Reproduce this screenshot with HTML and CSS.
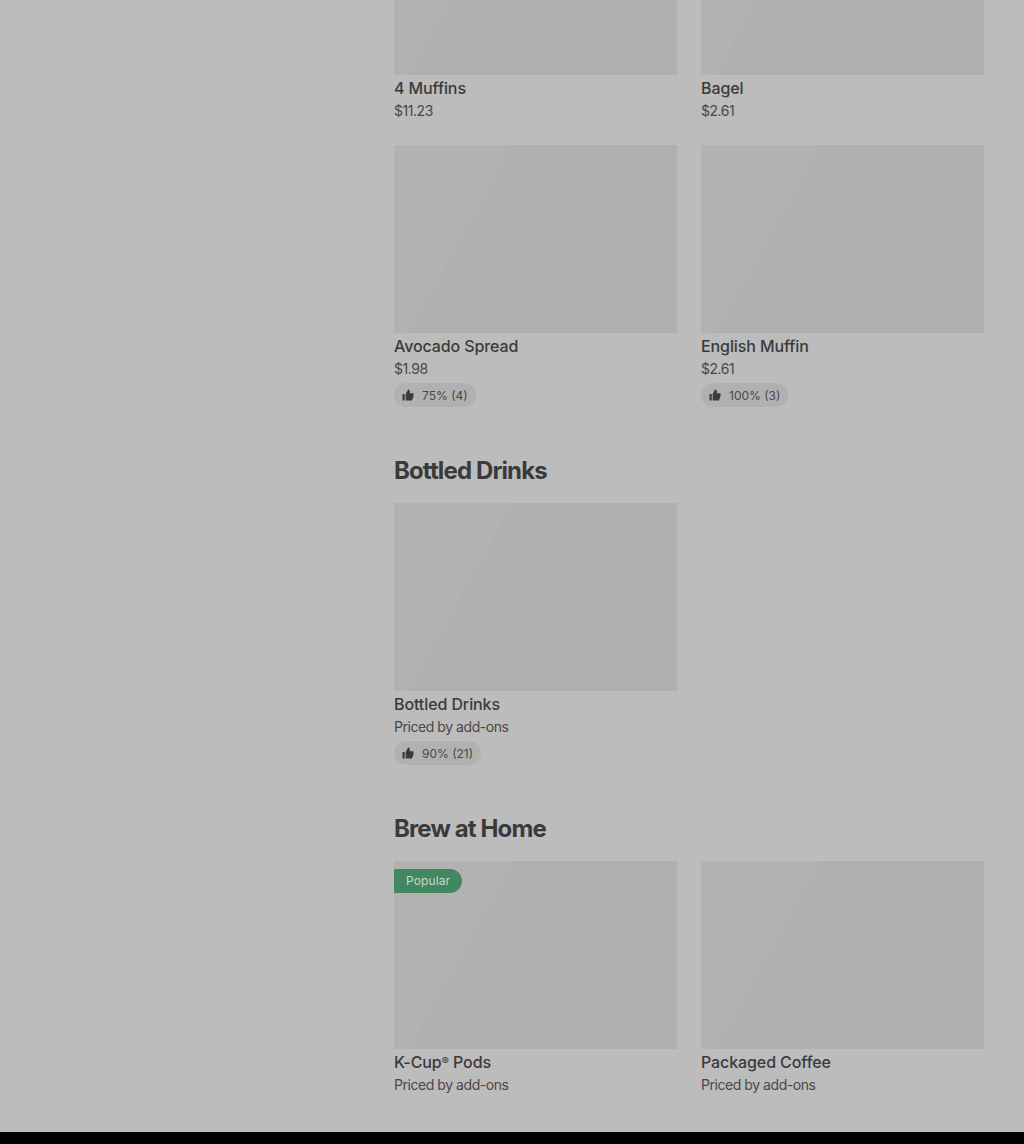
FILE: index.html
```html
<!DOCTYPE html>
<html lang="en">
<head>
  <meta charset="UTF-8">
  <title>Menu</title>
  <link rel="stylesheet" href="styles.css">
</head>
<body>
  <svg class="defs" width="0" height="0">
    <symbol id="thumb" viewBox="0 0 12 12">
      <path d="M0.5 5h2.2v6.5H0.5zM3.7 11.5V5l2.4-4.5c1.1 0 1.7 0.7 1.7 1.7V4.3h3.7v3.2l-1.6 4z"/>
    </symbol>
  </svg>

  <main class="menu">
    <section class="category first">
      <div class="grid">
        <div class="item">
          <div class="photo"></div>
          <div class="name">4 Muffins</div>
          <div class="price">$11.23</div>
        </div>
        <div class="item">
          <div class="photo"></div>
          <div class="name">Bagel</div>
          <div class="price">$2.61</div>
        </div>
        <div class="item">
          <div class="photo"></div>
          <div class="name">Avocado Spread</div>
          <div class="price">$1.98</div>
          <div class="rating"><svg class="thumb"><use href="#thumb"/></svg>75% (4)</div>
        </div>
        <div class="item">
          <div class="photo"></div>
          <div class="name">English Muffin</div>
          <div class="price">$2.61</div>
          <div class="rating"><svg class="thumb"><use href="#thumb"/></svg>100% (3)</div>
        </div>
      </div>
    </section>

    <section class="category">
      <h2>Bottled Drinks</h2>
      <div class="grid">
        <div class="item">
          <div class="photo"></div>
          <div class="name">Bottled Drinks</div>
          <div class="price">Priced by add-ons</div>
          <div class="rating"><svg class="thumb"><use href="#thumb"/></svg>90% (21)</div>
        </div>
      </div>
    </section>

    <section class="category">
      <h2>Brew at Home</h2>
      <div class="grid">
        <div class="item">
          <div class="photo"><span class="badge">Popular</span></div>
          <div class="name">K-Cup<span class="reg">®</span> Pods</div>
          <div class="price">Priced by add-ons</div>
        </div>
        <div class="item">
          <div class="photo"></div>
          <div class="name">Packaged Coffee</div>
          <div class="price">Priced by add-ons</div>
        </div>
      </div>
    </section>
  </main>

  <footer class="footer"></footer>
</body>
</html>
```

FILE: styles.css
```css
html, body {
  height: 1144px;
  overflow: hidden;
}
body {
  margin: 0;
  display: flex;
  flex-direction: column;
  background: #bcbcbc;
  color: #3a3a3a;
  font-family: Inter, "Liberation Sans", sans-serif;
}
.defs {
  position: absolute;
}
.menu {
  height: 1132px;
  box-sizing: border-box;
  padding: 0 40px 0 394px;
  overflow: hidden;
}
.category.first {
  margin-top: -113px;
}
.category h2 {
  margin: 48px 0 16px;
  height: 32px;
  font-size: 24px;
  line-height: 32px;
  font-weight: 700;
  letter-spacing: -0.88px;
}
.grid {
  display: grid;
  grid-template-columns: 283px 283px;
  column-gap: 24px;
  row-gap: 23px;
}
.photo {
  position: relative;
  height: 188px;
  background: linear-gradient(119deg, #b2b2b2 30.5%, #b0b0b0 30.5%, #afafaf 100%);
}
.name {
  margin-top: 1px;
  height: 24px;
  font-size: 16px;
  line-height: 24px;
  font-weight: 500;
  letter-spacing: -0.1px;
}
.reg {
  font-size: 11px;
  line-height: 0;
  vertical-align: 3px;
}
.price {
  font-size: 14px;
  line-height: 22px;
  letter-spacing: -0.45px;
  color: #484848;
}
.rating {
  display: inline-flex;
  align-items: center;
  gap: 8px;
  height: 24px;
  margin-top: 3px;
  padding: 0 8px;
  border-radius: 12px;
  background: #b1b1b1;
  font-size: 12px;
  color: #484848;
}
.thumb {
  width: 12px;
  height: 12px;
  fill: #3a3a3a;
}
.badge {
  position: absolute;
  top: 8px;
  left: 0;
  height: 24px;
  padding: 0 12px;
  border-radius: 0 12px 12px 0;
  background: #428760;
  color: #c6d9ce;
  font-size: 12px;
  line-height: 24px;
  letter-spacing: 0.1px;
}
.footer {
  height: 12px;
  background: #000;
}
```
